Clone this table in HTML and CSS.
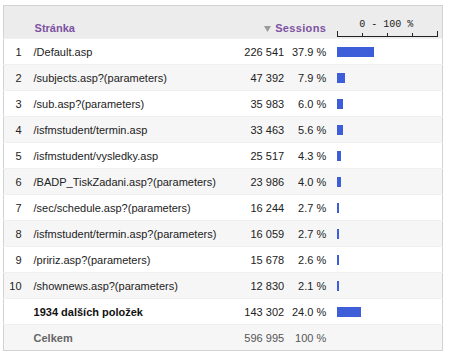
FILE: index.html
```html
<!DOCTYPE html>
<html lang="cs">
<head>
<meta charset="utf-8">
<title>Stránky</title>
<link rel="stylesheet" href="styles.css">
</head>
<body>
<div class="wrap">
<table class="report">
  <colgroup>
    <col class="c-num"><col class="c-page"><col class="c-val"><col class="c-pct"><col class="c-bar">
  </colgroup>
  <thead>
    <tr>
      <th></th>
      <th class="h-page">Stránka</th>
      <th class="h-sess" colspan="2"><svg class="tri" width="7" height="6" viewBox="0 0 7 6"><polygon points="0,0 7,0 3.5,6" fill="#9a9a9a"/></svg>Sessions</th>
      <th class="h-axis">
        <div class="axis">
          <span class="axis-label">0 - 100 %</span>
          <svg class="axis-svg" width="104" height="7" viewBox="0 0 104 7">
            <line x1="0" y1="6.5" x2="101" y2="6.5" stroke="#222" stroke-width="1"/>
            <line x1="0.5" y1="1" x2="0.5" y2="7" stroke="#222" stroke-width="1"/>
            <line x1="25.5" y1="3" x2="25.5" y2="7" stroke="#222" stroke-width="1"/>
            <line x1="50.5" y1="3" x2="50.5" y2="7" stroke="#222" stroke-width="1"/>
            <line x1="75.5" y1="3" x2="75.5" y2="7" stroke="#222" stroke-width="1"/>
            <line x1="100.5" y1="1" x2="100.5" y2="7" stroke="#222" stroke-width="1"/>
          </svg>
        </div>
      </th>
    </tr>
  </thead>
  <tbody>
    <tr><td class="num">1</td><td class="page">/Default.asp</td><td class="val">226 541</td><td class="pct">37.9 %</td><td class="bar"><div class="fill" style="width:37px"></div></td></tr>
    <tr class="alt"><td class="num">2</td><td class="page">/subjects.asp?(parameters)</td><td class="val">47 392</td><td class="pct">7.9 %</td><td class="bar"><div class="fill" style="width:8px"></div></td></tr>
    <tr><td class="num">3</td><td class="page">/sub.asp?(parameters)</td><td class="val">35 983</td><td class="pct">6.0 %</td><td class="bar"><div class="fill" style="width:6px"></div></td></tr>
    <tr class="alt"><td class="num">4</td><td class="page">/isfmstudent/termin.asp</td><td class="val">33 463</td><td class="pct">5.6 %</td><td class="bar"><div class="fill" style="width:6px"></div></td></tr>
    <tr><td class="num">5</td><td class="page">/isfmstudent/vysledky.asp</td><td class="val">25 517</td><td class="pct">4.3 %</td><td class="bar"><div class="fill" style="width:4px"></div></td></tr>
    <tr class="alt"><td class="num">6</td><td class="page">/BADP_TiskZadani.asp?(parameters)</td><td class="val">23 986</td><td class="pct">4.0 %</td><td class="bar"><div class="fill" style="width:4px"></div></td></tr>
    <tr><td class="num">7</td><td class="page">/sec/schedule.asp?(parameters)</td><td class="val">16 244</td><td class="pct">2.7 %</td><td class="bar"><div class="fill" style="width:2px"></div></td></tr>
    <tr class="alt"><td class="num">8</td><td class="page">/isfmstudent/termin.asp?(parameters)</td><td class="val">16 059</td><td class="pct">2.7 %</td><td class="bar"><div class="fill" style="width:2px"></div></td></tr>
    <tr><td class="num">9</td><td class="page">/pririz.asp?(parameters)</td><td class="val">15 678</td><td class="pct">2.6 %</td><td class="bar"><div class="fill" style="width:2px"></div></td></tr>
    <tr class="alt"><td class="num">10</td><td class="page">/shownews.asp?(parameters)</td><td class="val">12 830</td><td class="pct">2.1 %</td><td class="bar"><div class="fill" style="width:2px"></div></td></tr>
    <tr class="other"><td class="num"></td><td class="page">1934 dalších položek</td><td class="val">143 302</td><td class="pct">24.0 %</td><td class="bar"><div class="fill" style="width:24px"></div></td></tr>
    <tr class="total"><td class="num"></td><td class="page">Celkem</td><td class="val">596 995</td><td class="pct">100 %</td><td class="bar"></td></tr>
  </tbody>
</table>
</div>
</body>
</html>
```

FILE: styles.css
```css
html, body {
  margin: 0;
  padding: 0;
  background: #ffffff;
}

.wrap {
  padding: 5px 0 0 3px;
}

.report {
  border-collapse: collapse;
  table-layout: fixed;
  width: 440px;
  border: 1px solid #d2d2d2;
  font-family: "Liberation Sans", Arial, sans-serif;
  font-size: 11px;
  color: #222;
}

.c-num { width: 24px; }
.c-page { width: 190px; }
.c-val { width: 72px; }
.c-pct { width: 42px; }
.c-bar { width: 110px; }

.report thead tr {
  height: 33px;
  background: #ececec;
}

.report th {
  padding: 0;
  vertical-align: bottom;
  font-weight: bold;
  color: #7d52a3;
  text-align: left;
  white-space: nowrap;
}

.h-page {
  padding: 0 0 4px 7px !important;
}

.h-sess {
  text-align: right !important;
  padding: 0 6px 4px 0 !important;
  letter-spacing: 0.35px;
}

.tri {
  margin-right: 4px;
  vertical-align: 0px;
}

.h-axis {
  padding: 0 0 1px 5px !important;
}

.axis {
  display: flex;
  flex-direction: column;
  align-items: flex-start;
}

.axis-label {
  font-family: "Liberation Mono", "Courier New", monospace;
  font-weight: normal;
  font-size: 10px;
  color: #222;
  margin-left: 22px;
  line-height: 11px;
  margin-bottom: 0;
}

.axis-svg {
  display: block;
}

.report tbody tr {
  height: 26px;
  background: #ffffff;
  border-top: 1px solid #f0f0f0;
}

.report tbody tr.alt,
.report tbody tr.total {
  background: #f6f6f6;
}

.report td {
  padding: 0;
  vertical-align: middle;
  white-space: nowrap;
  color: #222;
}

.num {
  text-align: right;
  padding-right: 6px !important;
  color: #333;
}

.page {
  padding-left: 6px !important;
}

.val {
  text-align: right;
  padding-right: 6px !important;
  color: #333;
}

.pct {
  text-align: right;
  padding-right: 6px !important;
  color: #333;
}

.bar {
  padding-left: 5px !important;
}

.fill {
  height: 10px;
  background: #3d5ed8;
}

.other .page {
  font-weight: bold;
  color: #111;
}

.total .page {
  font-weight: bold;
  color: #666;
}

.total .val,
.total .pct {
  color: #555;
}
```
